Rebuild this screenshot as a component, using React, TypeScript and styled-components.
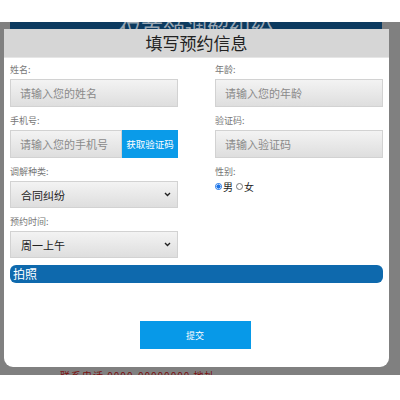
import styled, { createGlobalStyle } from "styled-components";

const GlobalStyle = createGlobalStyle`
  html, body {
    margin: 0;
    padding: 0;
    background: #ffffff;
  }
  body {
    font-family: "Noto Sans CJK SC", "Noto Sans", sans-serif;
  }
`;

const Page = styled.div`
  width: 400px;
  height: 400px;
  overflow: hidden;
  display: flex;
  flex-direction: column;
`;

const TopSpace = styled.div`
  height: 22px;
  background: #ffffff;
`;

const Backdrop = styled.div`
  position: relative;
  height: 353px;
  background: #808080;
  overflow: hidden;
`;

const BehindBanner = styled.div`
  margin: 0 18px 0 10px;
  height: 30px;
  background: #0c3a5f;
  color: #9aa7b3;
  font-size: 22px;
  line-height: 12px;
  text-align: center;
  overflow: hidden;
`;

const BehindFooter = styled.div`
  position: absolute;
  left: 60px;
  bottom: -8px;
  color: #7a1010;
  font-size: 10px;
  letter-spacing: 1px;
`;

const Modal = styled.div`
  position: absolute;
  left: 4px;
  top: 7px;
  width: 385px;
  height: 338px;
  background: #ffffff;
  border-radius: 0 0 9px 9px;
  display: flex;
  flex-direction: column;
`;

const Header = styled.div`
  height: 28px;
  background: #d6d6d6;
  border-bottom: 1px solid #e6e6e6;
  color: #222222;
  font-size: 17px;
  line-height: 28px;
  text-align: center;
`;

const Body = styled.div`
  padding: 5px 6px 0 6px;
  display: flex;
  flex-direction: column;
`;

const Grid = styled.div`
  display: grid;
  grid-template-columns: 168px 168px;
  column-gap: 37px;
  row-gap: 7px;
  align-items: start;
`;

const Field = styled.div`
  display: flex;
  flex-direction: column;
`;

const Label = styled.div`
  font-size: 9px;
  line-height: 14px;
  color: #777777;
  margin-bottom: 2px;
`;

const InputRow = styled.div`
  display: flex;
`;

const TextInput = styled.input<{ $grow?: boolean }>`
  box-sizing: border-box;
  width: ${(p) => (p.$grow ? "auto" : "100%")};
  flex: ${(p) => (p.$grow ? "1 1 0" : "none")};
  min-width: 0;
  height: 28px;
  margin: 0;
  padding: 0 9px;
  border: 1px solid #d2d2d2;
  border-radius: 0;
  background: linear-gradient(#f3f3f3, #dedede);
  font-family: "Noto Sans CJK SC", "Noto Sans", sans-serif;
  font-size: 11px;
  outline: none;
  &::placeholder {
    color: #8a8a8a;
  }
`;

const CodeButton = styled.button`
  flex: none;
  width: 56px;
  height: 28px;
  margin: 0;
  padding: 0;
  border: none;
  background: #0a9be9;
  color: #ffffff;
  font-family: "Noto Sans CJK SC", "Noto Sans", sans-serif;
  font-size: 9.5px;
`;

const Select = styled.div`
  box-sizing: border-box;
  height: 27px;
  padding: 0 6px 0 10px;
  border: 1px solid #d2d2d2;
  background: linear-gradient(#f3f3f3, #dedede);
  display: flex;
  align-items: center;
  justify-content: space-between;
  color: #222222;
  font-size: 11px;
`;

const RadioGroup = styled.div`
  display: flex;
  align-items: center;
  font-size: 10px;
  color: #222222;
  margin-top: -2px;
`;

const RadioDot = styled.span<{ $checked?: boolean }>`
  box-sizing: border-box;
  width: 7px;
  height: 7px;
  border-radius: 50%;
  border: 1px solid ${(p) => (p.$checked ? "#1a73e8" : "#777777")};
  background: ${(p) => (p.$checked ? "radial-gradient(circle, #1a73e8 55%, #ffffff 60%)" : "#ffffff")};
  margin-right: 1px;
`;

const RadioText = styled.span`
  margin-right: 3px;
`;

const PhotoBar = styled.div`
  margin-top: 7px;
  height: 18px;
  background: #0e69ad;
  border-radius: 6px;
  color: #ffffff;
  font-size: 12px;
  line-height: 18px;
  padding-left: 3px;
`;

const SubmitRow = styled.div`
  display: flex;
  justify-content: center;
  margin-top: 38px;
`;

const SubmitButton = styled.button`
  width: 111px;
  height: 28px;
  margin: 0 0 0 -3px;
  border: none;
  background: #0799e8;
  color: #ffffff;
  font-family: "Noto Sans CJK SC", "Noto Sans", sans-serif;
  font-size: 9px;
`;

function Chevron() {
  return (
    <svg width="7" height="5" viewBox="0 0 7 5">
      <path d="M1 1 L3.5 3.5 L6 1" fill="none" stroke="#222" strokeWidth="1.4" />
    </svg>
  );
}

export default function App() {
  return (
    <Page>
      <GlobalStyle />
      <TopSpace />
      <Backdrop>
        <BehindBanner>仅首领调解纠纷</BehindBanner>
        <BehindFooter>联系电话 0000-00000000 地址</BehindFooter>
        <Modal>
          <Header>填写预约信息</Header>
          <Body>
            <Grid>
              <Field>
                <Label>姓名:</Label>
                <TextInput placeholder="请输入您的姓名" />
              </Field>
              <Field>
                <Label>年龄:</Label>
                <TextInput placeholder="请输入您的年龄" />
              </Field>
              <Field>
                <Label>手机号:</Label>
                <InputRow>
                  <TextInput $grow placeholder="请输入您的手机号" />
                  <CodeButton>获取验证码</CodeButton>
                </InputRow>
              </Field>
              <Field>
                <Label>验证码:</Label>
                <TextInput placeholder="请输入验证码" />
              </Field>
              <Field>
                <Label>调解种类:</Label>
                <Select>
                  合同纠纷
                  <Chevron />
                </Select>
              </Field>
              <Field>
                <Label>性别:</Label>
                <RadioGroup>
                  <RadioDot $checked />
                  <RadioText>男</RadioText>
                  <RadioDot />
                  <RadioText>女</RadioText>
                </RadioGroup>
              </Field>
              <Field>
                <Label>预约时间:</Label>
                <Select>
                  周一上午
                  <Chevron />
                </Select>
              </Field>
            </Grid>
            <PhotoBar>拍照</PhotoBar>
            <SubmitRow>
              <SubmitButton>提交</SubmitButton>
            </SubmitRow>
          </Body>
        </Modal>
      </Backdrop>
    </Page>
  );
}
